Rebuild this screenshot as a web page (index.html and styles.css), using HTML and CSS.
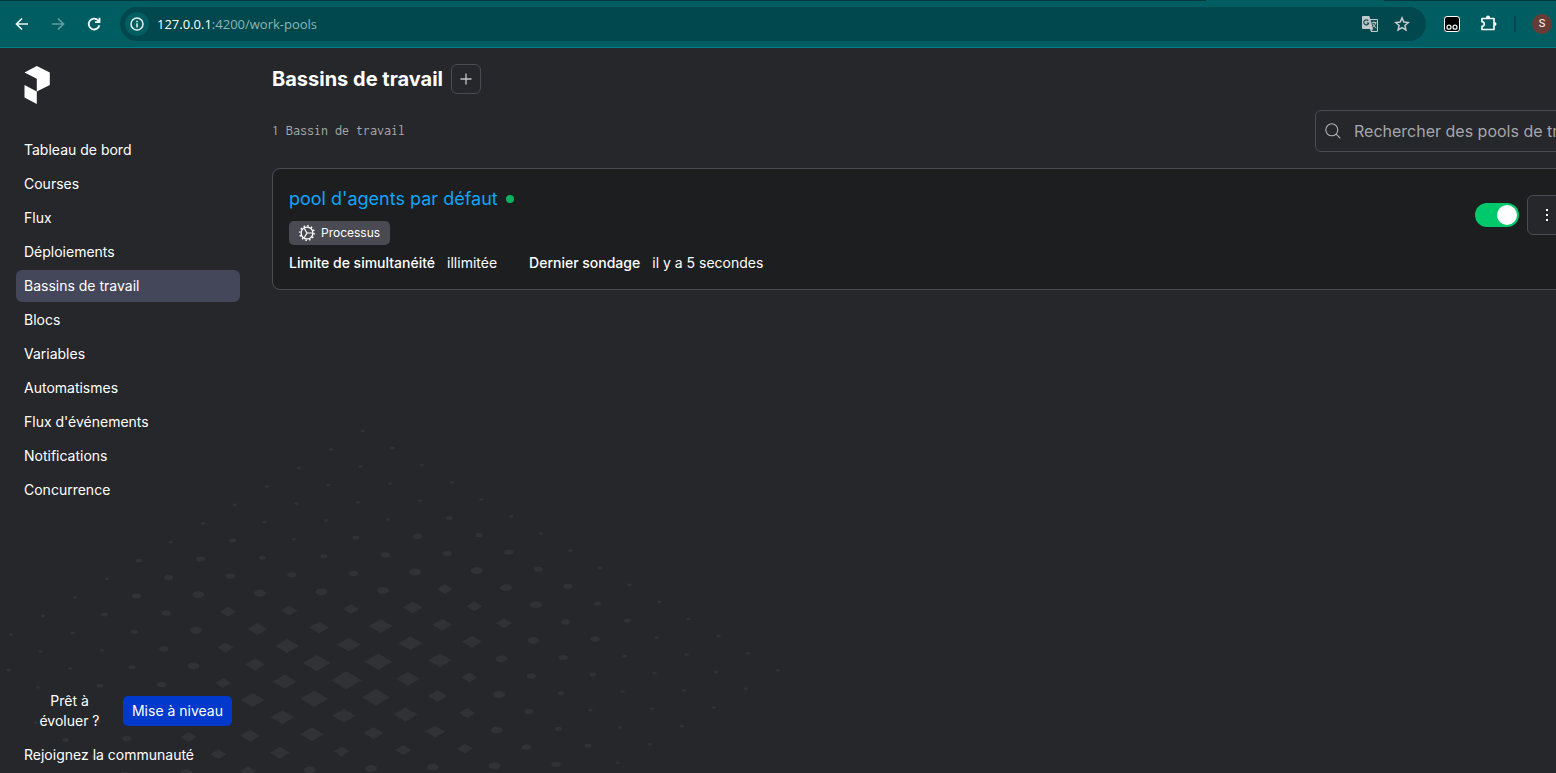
FILE: index.html
```html
<!DOCTYPE html>
<html lang="fr">
<head>
<meta charset="utf-8">
<title>Bassins de travail</title>
<link rel="stylesheet" href="styles.css">
</head>
<body>
<header class="toolbar">
  <span class="tab-gap"></span>
  <button class="tool" aria-label="Retour"><svg width="16" height="16" viewBox="0 0 16 16" fill="none" stroke="#e8f4f4" stroke-width="1.7"><path d="M14 8H3M8 2.5L2.5 8L8 13.5"/></svg></button>
  <button class="tool" aria-label="Avancer"><svg width="16" height="16" viewBox="0 0 16 16" fill="none" stroke="#5f9ea1" stroke-width="1.7"><path d="M2 8H13M8 2.5L13.5 8L8 13.5"/></svg></button>
  <button class="tool" aria-label="Actualiser"><svg width="16" height="16" viewBox="0 0 16 16" fill="none" stroke="#f2fafa" stroke-width="1.8"><path d="M13.4 9.3A5.4 5.4 0 1 1 12.2 4.5L13.3 5.6M13.5 1.8V6.2H9"/></svg></button>
  <div class="omnibox">
    <button class="site-info" aria-label="Informations sur le site"><svg width="14" height="14" viewBox="0 0 14 14" fill="none" stroke="#e6f2f2" stroke-width="1.5"><circle cx="7" cy="7" r="6"/><path d="M7 6.3V10.4M7 3.7V5.2"/></svg></button>
    <div class="url"><span class="host">127.0.0.1</span>:4200/work-pools</div>
    <button class="tool" aria-label="Traduire"><svg width="18" height="18" viewBox="0 0 18 18"><path d="M2 1H8.3L9.3 4H16A1 1 0 0 1 17 5V16A1 1 0 0 1 16 17H10L9 14H2A1 1 0 0 1 1 13V2A1 1 0 0 1 2 1Z" fill="#c3c9ca"/><path d="M9.6 5H16V16H10.7L12 14Z" fill="#174f53"/><path d="M10.7 7.7H15.6M13 6.5V7.7M14.8 7.7C14.3 10 13 11.4 11.5 12.2M11.8 8.8C12.5 10.5 13.7 12 15.3 13" stroke="#c3c9ca" fill="none"/><path d="M7.2 5.8A2.5 2.5 0 1 0 7.7 8H5.5" stroke="#174f53" stroke-width="1.2" fill="none"/></svg></button>
    <button class="tool" aria-label="Ajouter aux favoris"><svg width="16" height="16" viewBox="0 0 16 16" fill="none" stroke="#c5cdce" stroke-width="1.5"><path d="M8 1.9L9.8 6.1L14.3 6.5L10.9 9.5L11.9 13.9L8 11.6L4.1 13.9L5.1 9.5L1.7 6.5L6.2 6.1Z"/></svg></button>
  </div>
  <button class="tool" aria-label="Extension"><svg width="16" height="16" viewBox="0 0 16 16"><rect x=".5" y=".5" width="15" height="15" rx="2.5" fill="#000" stroke="#fff"/><g fill="#000" stroke="#e9f3f3" stroke-width="1.3"><circle cx="5" cy="11.2" r="2"/><circle cx="11" cy="11.2" r="2"/></g></svg></button>
  <button class="tool" aria-label="Extensions"><svg width="18" height="18" viewBox="-1 0 18 18"><path d="M2 3.5H14V8H14V14.5H2V11.3A2.3 2.3 0 0 0 2 6.7Z" fill="none" stroke="#f5fbfb" stroke-width="1.7" stroke-linejoin="round"/><path d="M6 3V2.5A2 2 0 0 1 10 2.5V3ZM14.5 7A2 2 0 0 1 14.5 11Z" fill="#f5fbfb"/></svg></button>
  <span class="divider"></span>
  <button class="avatar" aria-label="Profil">S</button>
</header>

<div class="app">
  <svg class="pattern" width="800" height="360" aria-hidden="true"></svg>
  <aside class="sidebar">
    <a class="logo" href="#" aria-label="Accueil"><svg width="26" height="38" viewBox="-0.5 0 26 38" fill="#fff"><path d="M0 6.5L12.3 0L25.3 6.5V19L12.3 25.5V12.8ZM0 19L12.3 25.5V38L0 31.5Z"/></svg></a>
    <nav class="nav">
      <a href="#">Tableau de bord</a>
      <a href="#">Courses</a>
      <a href="#">Flux</a>
      <a href="#">Déploiements</a>
      <a href="#" class="active" aria-current="page">Bassins de travail</a>
      <a href="#">Blocs</a>
      <a href="#">Variables</a>
      <a href="#">Automatismes</a>
      <a href="#">Flux d'événements</a>
      <a href="#">Notifications</a>
      <a href="#">Concurrence</a>
    </nav>
    <div class="upgrade">
      <span class="upgrade-text">Prêt à évoluer ?</span>
      <button class="upgrade-button">Mise à niveau</button>
    </div>
    <a class="community" href="#">Rejoignez la communauté</a>
  </aside>

  <main class="main">
    <div class="heading">
      <h1>Bassins de travail</h1>
      <button class="add" aria-label="Ajouter"><svg width="12" height="12" viewBox="0 0 12 12" stroke="#c4c5c9" stroke-width="1.3"><path d="M6 .5V11.5M.5 6H11.5"/></svg></button>
    </div>
    <div class="filters">
      <span class="count">1 Bassin de travail</span>
      <label class="search">
        <svg width="16" height="16" viewBox="0 0 16 16" fill="none" stroke="#b4b5b8" stroke-width="1.1"><circle cx="6.8" cy="6.8" r="6"/><path d="M11.2 11.2L15.3 15.3"/></svg>
        <input type="text" placeholder="Rechercher des pools de travail" aria-label="Rechercher des pools de travail">
      </label>
    </div>
    <section class="card">
      <div class="card-body">
        <div class="pool"><a href="#">pool d'agents par défaut</a><span class="status"></span></div>
        <span class="tag"><svg width="16" height="16" viewBox="0 0 16 16" fill="none" stroke="#fff"><circle cx="8" cy="8" r="5.9" stroke-width="1.3"/><circle cx="8" cy="8" r="7.2" stroke-width="1.4" stroke-dasharray="1.6 2.17"/><path d="M8 8H13.5M8 8L5.2 3.2M8 8L5.2 12.8" stroke-width="1.2"/></svg>Processus</span>
        <dl class="facts">
          <div><dt>Limite de simultanéité</dt><dd>illimitée</dd></div>
          <div><dt>Dernier sondage</dt><dd>il y a 5 secondes</dd></div>
        </dl>
      </div>
      <div class="card-actions">
        <input class="toggle" type="checkbox" checked aria-label="Activer le bassin">
        <button class="menu" aria-label="Plus d'actions"><svg width="4" height="14" viewBox="0 0 4 14" fill="#fff"><path d="M1 1H3V3H1ZM1 6H3V8H1ZM1 11H3V13H1Z"/></svg></button>
      </div>
    </section>
  </main>
</div>
<script src="pattern.js"></script>
</body>
</html>
```

FILE: styles.css
```css
* {
  box-sizing: border-box;
}

body {
  margin: 0;
  height: 100vh;
  display: flex;
  flex-direction: column;
  overflow: hidden;
  background: #26272b;
  color: #fff;
  font: 14px/20px Inter, "Liberation Sans", sans-serif;
}

button,
input {
  font: inherit;
  color: inherit;
}

button {
  display: flex;
  align-items: center;
  justify-content: center;
  padding: 0;
  border: 0;
  background: none;
}

a {
  color: inherit;
  text-decoration: none;
}

.toolbar {
  flex: none;
  position: relative;
  display: flex;
  align-items: center;
  height: 48px;
  padding: 0 4px 0 12px;
  gap: 16px;
  border-top: 1px solid #00383c;
  border-bottom: 1px solid #008085;
  background: #005d62;
}

.tab-gap {
  position: absolute;
  top: -1px;
  left: 1206px;
  width: 178px;
  height: 1px;
  background: #005d62;
}

.tool {
  flex: none;
  width: 20px;
  height: 20px;
}

.omnibox {
  flex: 1;
  display: flex;
  align-items: center;
  gap: 12px;
  height: 34px;
  padding: 0 14px 0 5px;
  border-radius: 17px;
  background: #00484d;
}

.site-info {
  flex: none;
  width: 24px;
  height: 24px;
  border-radius: 50%;
  background: #005d62;
}

.url {
  flex: 1;
  margin-left: -4px;
  color: #8fb5b7;
  font: 13px/20px "Open Sans", "Noto Sans", sans-serif;
}

.host {
  color: #fff;
}

.divider {
  width: 2px;
  height: 16px;
  background: #00484d;
}

.avatar {
  width: 20px;
  height: 20px;
  border-radius: 50%;
  background: #683c36;
  font: 11px/20px Roboto, sans-serif;
}

.app {
  flex: 1;
  min-height: 0;
  position: relative;
  display: flex;
  margin-right: -60px;
}

.pattern {
  position: absolute;
  left: 0;
  bottom: 0;
}

.sidebar {
  position: relative;
  flex: none;
  width: 256px;
  display: flex;
  flex-direction: column;
  padding: 18px 16px 2px;
}

.logo {
  height: 38px;
  margin: 0 8px 30px;
}

.logo svg {
  display: block;
}

.nav {
  flex: 1;
  display: flex;
  flex-direction: column;
  gap: 2px;
}

.nav a,
.community {
  padding: 6px 8px;
  border-radius: 6px;
}

.nav .active {
  background: #44475a;
}

.upgrade {
  display: flex;
  align-items: center;
  justify-content: space-between;
  padding: 0 8px;
  margin-bottom: 8px;
}

.upgrade-text {
  width: 91px;
  padding: 0 12px;
  text-align: center;
}

.upgrade-button {
  height: 30px;
  padding: 0 9px;
  border-radius: 5px;
  background: #0039cb;
}

.main {
  position: relative;
  flex: 1;
  min-width: 0;
  padding: 16px 32px 0 16px;
}

.heading {
  display: flex;
  align-items: center;
  gap: 8px;
}

h1 {
  margin: 0;
  font-size: 20px;
  line-height: 28px;
  font-weight: 700;
}

.add {
  width: 30px;
  height: 30px;
  border: 1px solid #4b4c53;
  border-radius: 6px;
}

.filters {
  display: flex;
  align-items: center;
  justify-content: space-between;
  margin: 16px 0;
}

.count {
  color: #a7a8ab;
  font: 14px/20px Inconsolata, "Liberation Mono", monospace;
}

.search {
  display: flex;
  align-items: center;
  gap: 13px;
  width: 269px;
  height: 42px;
  padding: 0 9px;
  border: 1px solid #4b4c53;
  border-radius: 6px;
}

.search svg {
  flex: none;
}

.search input {
  flex: 1;
  min-width: 0;
  padding: 0;
  border: 0;
  outline: 0;
  background: none;
  font-size: 16px;
}

.search input::placeholder {
  color: #a5a6a9;
  opacity: 1;
}

.card {
  display: flex;
  align-items: flex-start;
  justify-content: space-between;
  padding: 16px;
  border: 1px solid #4b4c53;
  border-radius: 8px;
  background: #1d1e20;
}

.card-body {
  display: flex;
  flex-direction: column;
  align-items: flex-start;
  gap: 8px;
}

.pool {
  display: flex;
  align-items: center;
  gap: 8px;
  color: #0ea5fa;
  font-size: 18px;
  line-height: 28px;
}

.status {
  width: 8px;
  height: 8px;
  border-radius: 50%;
  background: #0bb25f;
}

.tag {
  display: flex;
  align-items: center;
  gap: 6px;
  height: 24px;
  padding: 0 10px;
  border-radius: 5px;
  background: #4a4b52;
  font-size: 12px;
}

.facts {
  display: flex;
  gap: 32px;
  margin: 0;
}

.facts div {
  display: flex;
  gap: 12px;
}

.facts dt {
  font-weight: 500;
}

.facts dd {
  margin: 0;
}

.card-actions {
  display: flex;
  align-items: center;
  gap: 8px;
  margin-top: 10px;
}

.toggle {
  appearance: none;
  display: flex;
  align-items: center;
  justify-content: flex-end;
  width: 44px;
  height: 24px;
  margin: 0;
  padding: 2px;
  border-radius: 12px;
  background: #00c96b;
}

.toggle::before {
  content: "";
  width: 20px;
  height: 20px;
  border-radius: 50%;
  background: #fff;
}

.menu {
  width: 40px;
  height: 40px;
  border: 1px solid #4b4c53;
  border-radius: 6px;
  background: #26272b;
}
```

FILE: pattern.js
```js
// Isometric halftone: each row lists the size step of its dots.
const rows = [
  "000000010000",
  "0000012221000",
  "0000012321000",
  "00011234321100",
  "01222345432211",
  "01233456543322",
  "02345667665432",
  "0234567876543",
  "023456676654",
  "01233456543",
  "0122234543",
  "000112343",
  "00000123",
  "0000012",
  "000000",
];
// Half width and half height for each step.
const sizes = [[2.3, 1.4], [3.4, 2], [4.6, 2.6], [6, 3.5], [8, 5], [10, 6], [12, 7], [14, 8.2], [15.5, 9]];
const NS = "http://www.w3.org/2000/svg";
const svg = document.querySelector(".pattern");

rows.forEach((row, i) => {
  [...row].forEach((step, j) => {
    const x = 363 + 29.62 * i - 32 * j;
    const y = 18 + 17.1 * i + 18.5 * j;
    const [w, h] = sizes[step];
    const dot = document.createElementNS(NS, step < 4 ? "ellipse" : "path");
    if (step < 4) {
      dot.setAttribute("cx", x);
      dot.setAttribute("cy", y);
      dot.setAttribute("rx", w);
      dot.setAttribute("ry", h);
    } else {
      dot.setAttribute("d", `M${x - w} ${y}L${x} ${y - h}L${x + w} ${y}L${x} ${y + h}Z`);
    }
    dot.setAttribute("fill", "#313236");
    svg.append(dot);
  });
});
```
